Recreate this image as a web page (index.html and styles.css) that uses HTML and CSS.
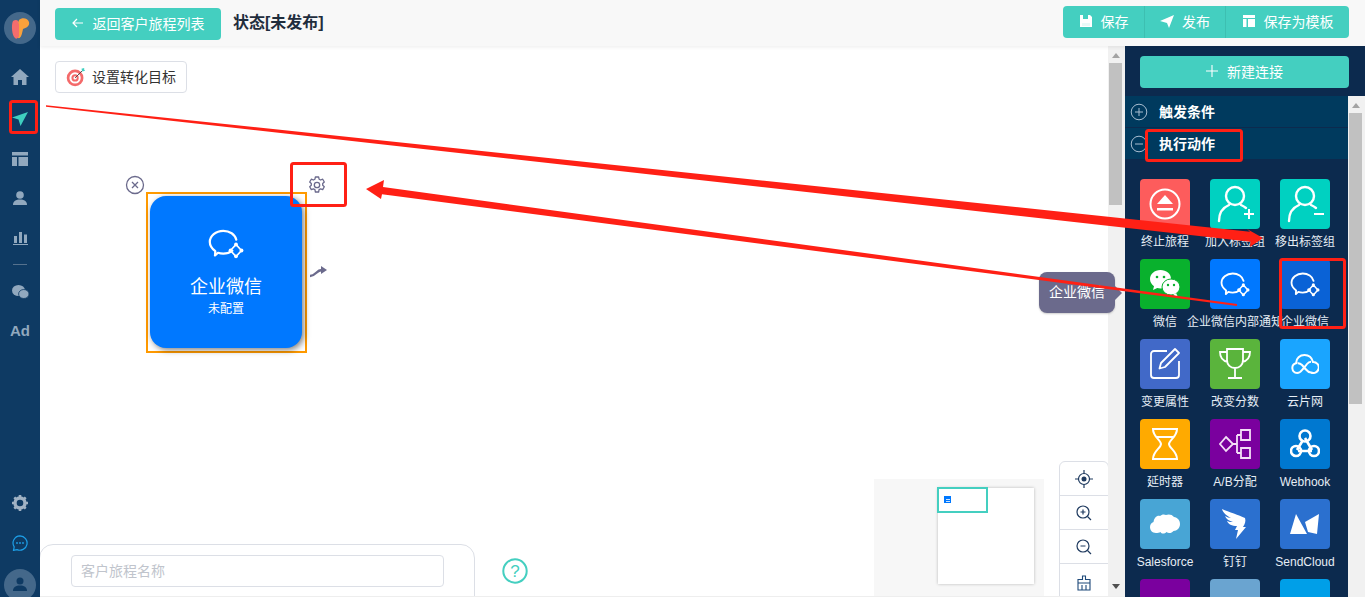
FILE: index.html
```html
<!DOCTYPE html>
<html lang="zh">
<head>
<meta charset="utf-8">
<title>客户旅程</title>
<link rel="stylesheet" href="styles.css">
</head>
<body>
<svg class="defs" width="0" height="0">
  <defs>
    <symbol id="wecom" viewBox="0 0 36 30">
      <path d="M7 26.5l.3-4.3C3.8 19.6 1.8 16.4 1.8 13 1.8 6.800 7.800 1.800 15.300 1.800c6.300 0 11.700 3.600 13 8.900M24.300 21.700c-2.400 1.900-5.600 3-9 3-1.900 0-3.700-.3-5.300-.9L7 26.500" fill="none" stroke="currentColor" stroke-width="2.200" stroke-linecap="round" stroke-linejoin="round"/>
      <path d="M28 15.500l5.500 6-5.500 6-5.500-6z" fill="none" stroke="currentColor" stroke-width="1.800" stroke-linejoin="round"/>
      <circle cx="28" cy="15.500" r="1.900" fill="currentColor"/><circle cx="33.500" cy="21.500" r="1.900" fill="currentColor"/><circle cx="28" cy="27.300" r="1.900" fill="currentColor"/><circle cx="22.500" cy="21.500" r="1.900" fill="currentColor"/>
    </symbol>
    <symbol id="person" viewBox="0 0 40 40">
      <circle cx="20" cy="12" r="9" fill="none" stroke="currentColor" stroke-width="2.400"/>
      <path d="M4 37c0-8 4-13.500 10-16M26 21c2 .8 3.600 1.800 5 3" fill="none" stroke="currentColor" stroke-width="2.400" stroke-linecap="round"/>
    </symbol>
  </defs>
</svg>
<div class="app">
  <nav class="side">
    <div class="logo"><svg width="32" height="32" viewBox="0 0 32 32"><path d="M9 9c3-2 6-1 6 3v10c0 3-2 6-4 4-3-2-4-13-2-17z" fill="#f46d6d"/><path d="M15 8c3-3 9-2 10 2s-3 6-6 7c-1 5-2 10-5 9 1-5-1-14 1-18z" fill="#f9a13c"/><path d="M14 11c1 0 1 1 1 2v11c-1 2-3 2-3 0 0-4 0-11 2-13z" fill="#f46d6d"/></svg></div>
    <svg class="ni ni-first" width="18" height="16" viewBox="0 0 18 16"><path d="M9 0L0 8h2.500v8h4.500v-5h4v5h4.500V8H18z" fill="#91a8be"/></svg>
    <svg class="ni ni-send" width="18" height="18" viewBox="0 0 18 18"><path d="M1 8.500L17 3 9.500 17 7.500 10.500z" fill="#3fcfc0"/></svg>
    <svg class="ni" width="16" height="14" viewBox="0 0 16 14"><path d="M0 0h16v3.500H0zM0 5h5v9H0zM6.500 5H16v9H6.500z" fill="#91a8be"/></svg>
    <svg class="ni" width="14" height="14" viewBox="0 0 14 14"><circle cx="7" cy="4" r="3.800" fill="#91a8be"/><path d="M0 14c0-4 3-5.500 7-5.500s7 1.500 7 5.500z" fill="#91a8be"/></svg>
    <svg class="ni" width="15" height="15" viewBox="0 0 15 15"><path d="M1 6h3v7H1zM6 2h3v11H6zM11 4.500h3V13h-3zM0 14h15v1H0z" fill="#91a8be"/></svg>
    <div class="sep"></div>
    <svg class="ni ni-wx" width="17" height="14" viewBox="0 0 17 14"><ellipse cx="6.500" cy="5.500" rx="6.500" ry="5.500" fill="#91a8be"/><ellipse cx="11.800" cy="9" rx="5.200" ry="4.500" fill="#91a8be" stroke="#0e3a63" stroke-width=".8"/></svg>
    <div class="ad">Ad</div>
    <div class="side-fill"></div>
    <svg class="ni ni-gear" width="16" height="16" viewBox="0 0 16 16"><circle cx="8" cy="8" r="5" fill="none" stroke="#a0b2c4" stroke-width="3.400"/><path d="M8 0v3M8 13v3M0 8h3M13 8h3M2.300 2.300l2 2M11.700 11.700l2 2M2.300 13.700l2-2M11.700 4.300l2-2" stroke="#a0b2c4" stroke-width="2.600"/></svg>
    <svg class="ni ni-chat" width="16" height="16" viewBox="0 0 16 16"><path d="M8 .8a7.200 7.200 0 1 1-3 13.800l-3.500 .8.700-3.500A7.200 7.200 0 0 1 8 .8z" fill="none" stroke="#1d9fe8" stroke-width="1.200"/><circle cx="5" cy="8" r=".9" fill="#1d9fe8"/><circle cx="8" cy="8" r=".9" fill="#1d9fe8"/><circle cx="11" cy="8" r=".9" fill="#1d9fe8"/></svg>
    <div class="avatar"><svg width="14" height="14" viewBox="0 0 14 14"><circle cx="7" cy="4" r="3.500" fill="#0e3a63"/><path d="M0 14c0-4 3-5.500 7-5.500s7 1.500 7 5.500z" fill="#0e3a63"/></svg></div>
  </nav>

  <div class="main">
    <header class="top">
      <a class="btn back"><svg width="12" height="10" viewBox="0 0 12 10"><path d="M11 5H1.500M5 1L1 5l4 4" fill="none" stroke="#fff" stroke-width="1.200"/></svg>返回客户旅程列表</a>
      <h1 class="status">状态[未发布]</h1>
      <div class="actions">
        <a class="act"><svg width="14" height="14" viewBox="0 0 14 14"><path d="M1 1h10l2 2v10H1z" fill="#fff"/><path d="M4 1h5v4H4z" fill="#44cfc0"/><path d="M3 9h8v3H3z" fill="#e8faf8"/></svg>保存</a>
        <a class="act"><svg width="14" height="14" viewBox="0 0 14 14"><path d="M0 7L14 1 9 14l-2-5z" fill="#fff"/></svg>发布</a>
        <a class="act"><svg width="14" height="14" viewBox="0 0 14 14"><path d="M1 1h12v3H1zM1 5h3.500v8H1zM6 5h7v8H6z" fill="#fff"/></svg>保存为模板</a>
      </div>
    </header>

    <div class="body">
      <section class="canvas">
        <a class="goal">
          <svg width="22" height="22" viewBox="0 0 22 22"><circle cx="10" cy="12" r="9.200" fill="#f46a6a"/><circle cx="10" cy="12" r="6.200" fill="#fff"/><circle cx="10" cy="12" r="4" fill="#f46a6a"/><circle cx="10" cy="12" r="1.800" fill="#fff"/><path d="M10 12L19 3" stroke="#444" stroke-width="1"/><path d="M17 2l3-1v2l1 1-3 1z" fill="#3fcfc0"/></svg>
          <span class="goal-text">设置转化目标</span>
        </a>

        <svg class="node-close" width="20" height="20" viewBox="0 0 20 20"><circle cx="10" cy="10" r="8.500" fill="none" stroke="#6b6a8c" stroke-width="1.300"/><path d="M7 7l6 6M13 7l-6 6" stroke="#6b6a8c" stroke-width="1.300"/></svg>
        <svg class="node-gear" width="18" height="18" viewBox="0 0 18 18"><path d="M7.400 1h3.200l.5 2.200 1.500.8 2.100-.8 1.600 2.800-1.600 1.500v1.800l1.600 1.500-1.600 2.800-2.100-.8-1.500.8-.5 2.400H7.400l-.5-2.400-1.500-.8-2.100.8-1.600-2.800 1.600-1.500V7.500L1.700 6l1.600-2.800 2.100.8 1.500-.8z" fill="none" stroke="#6b6a8c" stroke-width="1.300" stroke-linejoin="round"/><circle cx="9" cy="9" r="2.700" fill="none" stroke="#6b6a8c" stroke-width="1.300"/></svg>
        <div class="node">
          <div class="node-card">
            <svg class="node-icon" width="36" height="30"><use href="#wecom"/></svg>
            <div class="node-name">企业微信</div>
            <div class="node-state">未配置</div>
          </div>
        </div>
        <svg class="node-link" width="18" height="12" viewBox="0 0 18 12"><path d="M1 10c3 0 4-1 6-3s3-3 6-3" fill="none" stroke="#6b6a8c" stroke-width="2.400"/><path d="M12 0l6 4-6 4z" fill="#6b6a8c"/></svg>

        <div class="mini">
          <div class="mini-page"><div class="mini-view"><div class="mini-node"><u class="mini-line"></u><u class="mini-line"></u></div></div></div>
        </div>

        <div class="zoomer">
          <div class="z"><svg width="18" height="18" viewBox="0 0 18 18"><circle cx="9" cy="9" r="5.500" fill="none" stroke="#1f3a5f" stroke-width="1.200"/><circle cx="9" cy="9" r="2.500" fill="#1f3a5f"/><path d="M9 0v3.500M9 14.500V18M0 9h3.500M14.500 9H18" stroke="#1f3a5f" stroke-width="1.200"/></svg></div>
          <div class="z"><svg width="16" height="16" viewBox="0 0 16 16"><circle cx="7" cy="7" r="6" fill="none" stroke="#1f3a5f" stroke-width="1.200"/><path d="M4.500 7h5M7 4.500v5M11.500 11.500L15 15" stroke="#1f3a5f" stroke-width="1.200"/></svg></div>
          <div class="z"><svg width="16" height="16" viewBox="0 0 16 16"><circle cx="7" cy="7" r="6" fill="none" stroke="#1f3a5f" stroke-width="1.200"/><path d="M4.500 7h5M11.500 11.500L15 15" stroke="#1f3a5f" stroke-width="1.200"/></svg></div>
          <div class="z z-last"><svg width="16" height="16" viewBox="0 0 16 16"><path d="M6.500 1h3v3.500h4.500v3.500H2V4.500h4.500zM2 8h12v7H2zM6 10v5M10 10v5" fill="none" stroke="#1f4a7a" stroke-width="1.100"/></svg></div>
        </div>

        <div class="namebar">
          <div class="name-input">客户旅程名称</div>
        </div>
        <svg class="help" width="26" height="26" viewBox="0 0 26 26"><circle cx="13" cy="13" r="11.700" fill="none" stroke="#44cfc0" stroke-width="2"/><text x="13" y="18.500" text-anchor="middle" class="help-q">?</text></svg>

        <div class="sb sb-canvas"><i class="up"></i><b class="thumb thumb-canvas"></b><s class="sb-gap"></s><i class="down"></i></div>

        <div class="tip">企业微信</div>
      </section>

      <aside class="panel">
        <a class="btn newconn"><svg width="12" height="12" viewBox="0 0 12 12"><path d="M6 0v12M0 6h12" stroke="#fff" stroke-width="1.100"/></svg>新建连接</a>
        <div class="panel-body">
          <div class="list">
            <div class="row"><svg width="18" height="18" viewBox="0 0 18 18"><circle cx="9" cy="9" r="7.800" fill="none" stroke="#a9bdd0" stroke-width="1"/><path d="M5 9h8M9 5v8" stroke="#a9bdd0"/></svg>触发条件</div>
            <div class="row"><svg width="18" height="18" viewBox="0 0 18 18"><circle cx="9" cy="9" r="7.800" fill="none" stroke="#a9bdd0" stroke-width="1"/><path d="M5 9h8" stroke="#a9bdd0"/></svg>执行动作</div>
            <div class="grid">
              <div class="cell"><div class="ic c-coral"><svg width="36" height="36" viewBox="0 0 36 36"><circle cx="18" cy="18" r="14.500" fill="none" stroke="#fff" stroke-width="2"/><path d="M18 9l8 9H10z" fill="#fff"/><path d="M10 22h16v2.500H10z" fill="#fff"/></svg></div><span>终止旅程</span></div>
              <div class="cell"><div class="ic c-teal"><svg class="ic-p" width="40" height="40"><use href="#person"/></svg><svg class="ic-m" width="12" height="12" viewBox="0 0 12 12"><path d="M6 1v10M1 6h10" stroke="#fff" stroke-width="2"/></svg></div><span>加入标签组</span></div>
              <div class="cell"><div class="ic c-teal"><svg class="ic-p" width="40" height="40"><use href="#person"/></svg><svg class="ic-m" width="12" height="12" viewBox="0 0 12 12"><path d="M1 6h10" stroke="#fff" stroke-width="2"/></svg></div><span>移出标签组</span></div>

              <div class="cell"><div class="ic c-green"><svg width="32" height="30" viewBox="0 0 32 30"><path d="M11.500 1C5.500 1 1 5 1 10c0 3 1.600 5.500 4 7.200L4 21l4.200-2.100c1.100.3 2.200.5 3.300.5 5.800 0 10.500-4 10.500-9.400S17.300 1 11.500 1z" fill="#fff"/><ellipse cx="22" cy="18" rx="9" ry="8" fill="#fff" stroke="#09b12d"/><path d="M27 24l2 4-5-2z" fill="#fff"/><circle cx="8" cy="8" r="1.300" fill="#09b12d"/><circle cx="15" cy="8" r="1.300" fill="#09b12d"/><circle cx="19" cy="16" r="1.200" fill="#09b12d"/><circle cx="25" cy="16" r="1.200" fill="#09b12d"/></svg></div><span>微信</span></div>
              <div class="cell"><div class="ic c-blue"><svg width="30" height="25"><use href="#wecom"/></svg></div><span>企业微信内部通知</span></div>
              <div class="cell"><div class="ic c-sel"><svg width="30" height="25"><use href="#wecom"/></svg></div><span>企业微信</span></div>

              <div class="cell"><div class="ic c-indigo"><svg width="32" height="32" viewBox="0 0 32 32"><path d="M18 3H5a3 3 0 0 0-3 3v21a3 3 0 0 0 3 3h22a3 3 0 0 0 3-3V13" fill="none" stroke="#fff" stroke-width="1.800"/><path d="M26 1l4 4-14 14-5.500 1.500L12 15z" fill="none" stroke="#fff" stroke-width="1.800" stroke-linejoin="round"/></svg></div><span>变更属性</span></div>
              <div class="cell"><div class="ic c-lime"><svg width="32" height="32" viewBox="0 0 32 32"><path d="M8 1h16v11c0 5-3.500 8-8 8s-8-3-8-8zM8 4H1c0 5 2.500 9 8 10M24 4h7c0 5-2.500 9-8 10M16 20v9M9 30h14" fill="none" stroke="#fff" stroke-width="1.800"/></svg></div><span>改变分数</span></div>
              <div class="cell"><div class="ic c-sky"><svg width="28" height="20" viewBox="0 0 28 20"><path d="M6 19a5 5 0 0 1-1-9.800C5 4 9 1 13.500 1S21 4 22 8a5.500 5.500 0 1 1-2 10.500c-2 0-3.500-1.200-5-3l-4-4.500C9.800 9.800 8 9 6.500 9.200M6 19c2.500 0 4-1.500 5-3l3-3.500 2-2.500c1-1.300 2.500-2.200 4-2.200" fill="none" stroke="#fff" stroke-width="2"/></svg></div><span>云片网</span></div>

              <div class="cell"><div class="ic c-amber"><svg width="26" height="32" viewBox="0 0 26 32"><path d="M1 1h24c0 8-8 11-8 15s8 7 8 15H1c0-8 8-11 8-15S1 9 1 1zM4 9h18" fill="none" stroke="#fff" stroke-width="2"/></svg></div><span>延时器</span></div>
              <div class="cell"><div class="ic c-purple"><svg width="32" height="30" viewBox="0 0 32 30"><path d="M7 8l7 7-7 7-6-7z" fill="none" stroke="#f3dff6" stroke-width="1.800"/><path d="M22 1h9v10h-9zM22 19h9v10h-9zM14 15h4M18 6v18M18 6h4M18 24h4" fill="none" stroke="#f3dff6" stroke-width="1.800"/></svg></div><span>A/B分配</span></div>
              <div class="cell"><div class="ic c-azure"><svg width="30" height="30" viewBox="0 0 30 30"><circle cx="15" cy="7" r="5.500" fill="none" stroke="#fff" stroke-width="2.600"/><circle cx="6" cy="22" r="5" fill="none" stroke="#fff" stroke-width="2.600"/><circle cx="24" cy="22" r="5" fill="none" stroke="#fff" stroke-width="2.600"/><path d="M15 9l7 12M8 22h14M13 11L7 21" fill="none" stroke="#fff" stroke-width="2.600"/></svg></div><span>Webhook</span></div>

              <div class="cell"><div class="ic c-sf"><svg width="30" height="20" viewBox="0 0 30 20"><path d="M6 19C2 19 0 16 0 13c0-2.500 1.500-4.500 3.500-5C4 4 7 1 10 2c1.500-1.500 4-2 6-1 2-1 6-1 8 2 3.500.5 6 3 6 7s-3 7-6.500 7c-1.500 2-5 3-7 1-2 2-5 2-6 0-1 .8-3 1-4.500 1z" fill="#fff"/></svg></div><span>Salesforce</span></div>
              <div class="cell"><div class="ic c-ding"><svg width="26" height="30" viewBox="0 0 26 30"><path d="M0 0c7 3 17 6 23 9 1 3 0 6-2 9h3l-10 12 2-9h-3l2-4c-5 0-9-2-10-5 2 1 4 1 6 1-4-1-7-3-8-6 2 1 4 2 6 2C5 7 1 4 0 0z" fill="#fff"/></svg></div><span>钉钉</span></div>
              <div class="cell"><div class="ic c-ding"><svg width="30" height="20" viewBox="0 0 30 20"><path d="M0 20L6 0l11 20zM18 18L15 8 29 0l-2 20z" fill="#fff"/></svg></div><span>SendCloud</span></div>

              <div class="cell"><div class="ic c-purple"></div></div>
              <div class="cell"><div class="ic c-steel"></div></div>
              <div class="cell"><div class="ic c-cyan"></div></div>
            </div>
          </div>
          <div class="sb sb-panel"><i class="up"></i><b class="thumb thumb-panel"></b></div>
        </div>
      </aside>
    </div>
  </div>
</div>

<svg class="notes" width="1365" height="597" viewBox="0 0 1365 597">
  <g fill="none" stroke="#ff2015" stroke-width="3">
    <rect x="10.500" y="101.500" width="26" height="31" rx="2"/>
    <rect x="291.500" y="163.500" width="54" height="42" rx="2"/>
    <rect x="1146.500" y="130.500" width="95" height="30" rx="2"/>
    <rect x="1280.500" y="259.500" width="64" height="68" rx="2"/>
  </g>
  <path d="M46 105.200L1250 231.700 1247 229 1263 238 1250 247 1250.500 241.700 46 106.800z" fill="#ff2015"/>
  <path d="M1237 304L383 187 384 180 366 189 381 199 382 194.200 1237 306z" fill="#ff2015"/>
</svg>
</body>
</html>
```

FILE: styles.css
```css
* { box-sizing: border-box; }
html, body { margin: 0; height: 597px; overflow: hidden; }
body { font-family: "Liberation Sans", "Noto Sans CJK SC", sans-serif; font-size: 14px; color: #333; background: #fff; position: relative; }
.defs { position: absolute; }
.app { display: flex; height: 597px; }

/* sidebar */
.side { width: 40px; flex: none; background: #0e3a63; display: flex; flex-direction: column; align-items: center; padding-top: 12px; overflow: hidden; }
.logo { width: 32px; height: 32px; border-radius: 50%; background: #44688a; flex: none; }
.logo svg { display: block; }
.ni { flex: none; display: block; margin-top: 25px; }
.ni-first { margin-top: 25px; }
.ni-send { margin-top: 24px; color: #3fcfc0; }
.sep { width: 14px; height: 1px; background: #55718d; margin-top: 19px; flex: none; }
.ni-wx { margin-top: 20px; }
.ad { color: #91a8be; font-weight: 700; font-size: 15px; line-height: 16px; margin-top: 24px; }
.side-fill { flex: 1; }
.ni-gear { margin-top: 0; }
.ni-chat { margin-top: 24px; }
.avatar { width: 32px; height: 32px; border-radius: 50%; background: #44688a; flex: none; margin: 18px 0 -4px; display: flex; justify-content: center; padding-top: 8px; }

.main { flex: 1; min-width: 0; display: flex; flex-direction: column; }

/* top */
.top { height: 46px; flex: none; background: #f8f8f8; display: flex; align-items: flex-start; padding: 8px 16px 0 15px; position: relative; z-index: 2; box-shadow: 0 1px 4px rgba(0,0,0,.08); }
.btn { display: flex; align-items: center; justify-content: center; background: #44cfc0; color: #fff; border-radius: 4px; height: 32px; padding-bottom: 2px; }
.back { width: 166px; gap: 9px; }
.status { margin: 0 0 0 12px; font-size: 16px; font-weight: 700; line-height: 30px; color: #1f2d3d; }
.actions { margin-left: auto; margin-top: -2px; display: flex; height: 32px; background: #44cfc0; border-radius: 4px; color: #fff; width: 286px; }
.act { display: flex; align-items: center; justify-content: center; gap: 8px; border-left: 1px solid #3dbfb1; width: 81px; padding-bottom: 2px; }
.act:first-child { border-left: 0; }
.act:last-child { flex: 1; }

/* canvas */
.body { flex: 1; min-height: 0; display: flex; }
.canvas { flex: 1; min-width: 0; position: relative; overflow: hidden; background: #fff; padding: 15px; border-bottom: 1px solid #eee; }
.goal { display: inline-flex; align-items: center; gap: 6px; height: 32px; padding: 0 10px; width: 132px; border: 1px solid #dcdfe6; border-radius: 4px; background: #fff; color: #333; white-space: nowrap; }
.goal-text { margin-top: -2px; }

.node-close { position: absolute; left: 85px; top: 129px; }
.node-gear { position: absolute; left: 268px; top: 130px; }
.node { position: absolute; left: 106px; top: 146px; width: 161px; height: 161px; border: 2px solid #ff9a00; padding: 2px 3px 0 2px; }
.node-card { width: 152px; height: 152px; background: #0078ff; border-radius: 16px; box-shadow: 2px 2px 6px rgba(0,0,0,.5); color: #fff; display: flex; flex-direction: column; align-items: center; padding-top: 33px; }
.node-icon { display: block; }
.node-name { font-size: 18px; line-height: 26px; margin-top: 15px; }
.node-state { font-size: 12px; line-height: 16px; margin-top: 1px; }
.node-link { position: absolute; left: 269px; top: 220px; }

.tip { position: absolute; left: 999px; top: 226px; width: 76px; height: 41px; line-height: 41px; text-align: center; border-radius: 8px; background: #6b6a8c; color: #fff; box-shadow: 0 1px 2px rgba(0,0,0,.2); }
.tip::after { content: ""; position: absolute; left: 76px; top: 14px; border: 7px solid transparent; border-left-color: #6b6a8c; border-right-width: 0; }

.mini { position: absolute; left: 834px; top: 433px; width: 170px; height: 118px; background: #f7f7f7; padding: 9px 0 0 64px; }
.mini-page { width: 96px; height: 96px; background: #fff; box-shadow: 0 0 3px rgba(0,0,0,.25); position: relative; }
.mini-view { position: absolute; left: -1px; top: -1px; width: 51px; height: 26px; border: 2px solid #44cfc0; padding: 7px 0 0 5px; }
.mini-node { width: 7px; height: 7px; background: #0078ff; padding: 3px 1px 0 2px; }
.mini-line { display: block; height: 1px; background: #cfe4ff; margin-bottom: 1px; }

.zoomer { position: absolute; left: 1019px; top: 415px; width: 50px; height: 150px; background: #fff; border: 1px solid #dcdfe6; border-radius: 6px; }
.z { height: 34px; display: flex; align-items: center; justify-content: center; border-bottom: 1px solid #dcdfe6; }
.z-last { border-bottom: 0; height: 37px; }
.z svg { display: block; }

.namebar { position: absolute; left: -1px; top: 498px; width: 436px; height: 80px; background: #fff; border: 1px solid #dcdfe6; border-radius: 14px; padding: 10px 0 0 31px; }
.name-input { width: 373px; height: 32px; border: 1px solid #dcdfe6; border-radius: 4px; color: #c0c4cc; line-height: 30px; padding-left: 9px; }
.help { position: absolute; left: 462px; top: 512px; }
.help-q { font-size: 17px; fill: #44cfc0; font-family: "Liberation Sans", sans-serif; }

/* scrollbars */
.sb { width: 17px; flex: none; background: #f1f1f1; display: flex; flex-direction: column; align-items: flex-start; padding-left: 1px; }
.sb-canvas { position: absolute; right: 0; top: 0; bottom: 0; }
.sb i { display: block; width: 0; height: 0; border: 4px solid transparent; margin-left: 3px; }
.sb .up { border-top: 0; border-bottom: 5px solid #a3a3a3; margin-top: 7px; margin-bottom: 5px; }
.sb .down { border-bottom: 0; border-top: 5px solid #505050; margin-bottom: 7px; }
.thumb { width: 13px; background: #c1c1c1; display: block; }
.thumb-canvas { height: 142px; }
.thumb-panel { height: 291px; }
.sb-gap { flex: 1; }

/* panel */
.panel { width: 240px; flex: none; background: #0c2a4e; display: flex; flex-direction: column; padding-top: 10px; min-height: 0; position: relative; z-index: 1; }
.newconn { margin-left: 15px; width: 209px; gap: 9px; flex: none; }
.panel-body { flex: 1; min-height: 0; margin-top: 8px; display: flex; overflow: hidden; }
.list { flex: 1; min-width: 0; }
.row { height: 31px; margin-bottom: 1px; background: #003a5e; color: #fff; font-weight: 700; display: flex; align-items: center; padding: 0 0 2px 5px; gap: 11px; }
.row svg { margin-top: 2px; }
.grid { display: grid; grid-template-columns: repeat(3, 70px); grid-auto-rows: 80px; padding: 19px 0 0 5px; }
.cell { display: flex; flex-direction: column; align-items: center; }
.cell span { font-size: 12px; line-height: 26px; color: #e6edf5; white-space: nowrap; }
.ic { width: 50px; height: 50px; flex: none; border-radius: 4px; display: flex; align-items: center; justify-content: center; color: #fff; position: relative; }
.ic svg { display: block; }
.ic-m { position: absolute; right: 5px; bottom: 9px; }
.c-coral { background: #fd5c5c; }
.c-teal { background: #00d1c1; }
.c-green { background: #09b12d; }
.c-blue { background: #0078ff; }
.c-sel { background: #0a62d6; }
.c-indigo { background: #4169c8; }
.c-lime { background: #5ab43c; }
.c-sky { background: #1aa5ff; }
.c-amber { background: #ffaa00; }
.c-purple { background: #7a009e; }
.c-azure { background: #0078d0; }
.c-sf { background: #48a5d5; }
.c-ding { background: #2b70cf; }
.c-steel { background: #6aa4d0; }
.c-cyan { background: #009fe8; }

/* annotations over the screenshot */
.notes { position: absolute; left: 0; top: 0; z-index: 5; pointer-events: none; }
```
